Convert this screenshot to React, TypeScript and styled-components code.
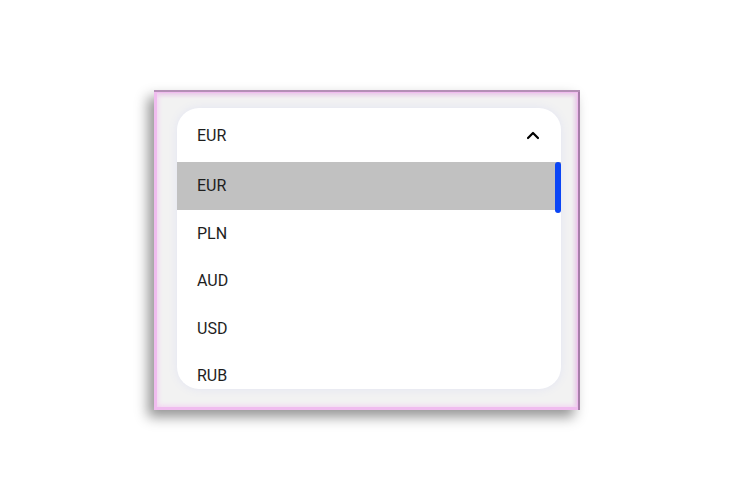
import * as React from 'react';
import styled, { createGlobalStyle } from 'styled-components';

const GlobalStyle = createGlobalStyle`
  html, body {
    margin: 0;
    padding: 0;
    background: #ffffff;
    font-family: Roboto, "Noto Sans", sans-serif;
  }
`;

const Page = styled.div`
  width: 734px;
  height: 500px;
  display: flex;
  align-items: center;
  justify-content: center;
`;

// the outer frame: soft pink bevel, darker violet along top and right
const Frame = styled.div`
  box-sizing: border-box;
  width: 426px;
  height: 320px;
  padding: 18px 19px 21px 23px;
  background: #f2f2f2;
  box-shadow:
    inset 0 2px 0 #b48fb6,
    inset -2px 0 0 #a77ea9,
    inset 0 0 0 3px #f0bcef,
    inset 0 0 5px 4px #f3cff2,
    inset -4px 4px 4px rgba(160, 110, 165, 0.4),
    -6px 7px 12px rgba(0, 0, 0, 0.42);
`;

const Select = styled.div`
  height: 281px;
  background: #ffffff;
  border-radius: 22px;
  overflow: hidden;
  display: flex;
  flex-direction: column;
  box-shadow: 0 0 10px rgba(120, 140, 255, 0.12);
`;

const Header = styled.div`
  flex: 0 0 54px;
  display: flex;
  align-items: center;
  justify-content: space-between;
  padding: 0 21px 0 20px;
  font-size: 16px;
  color: #1e1e1e;
`;

const List = styled.div`
  position: relative;
  flex: 1;
  overflow: hidden;
`;

const Option = styled.div<{ $active?: boolean }>`
  height: 47.5px;
  display: flex;
  align-items: center;
  padding-left: 20px;
  font-size: 16px;
  color: #1e1e1e;
  background: ${(p) => (p.$active ? '#c1c1c1' : 'transparent')};
`;

const Thumb = styled.div`
  position: absolute;
  top: 0;
  right: 0;
  width: 6px;
  height: 51px;
  border-radius: 3px;
  background: #0a45f5;
`;

const Chevron = () => (
  <svg width="14" height="10" viewBox="0 0 14 10" fill="none">
    <path d="M2 8 L7 3 L12 8" stroke="#000" strokeWidth="2.2" strokeLinecap="round" strokeLinejoin="round" />
  </svg>
);

const currencies = ['EUR', 'PLN', 'AUD', 'USD', 'RUB'];

export default function App() {
  const selected = 'EUR';
  return (
    <>
      <GlobalStyle />
      <Page>
        <Frame>
          <Select>
            <Header>
              <span>{selected}</span>
              <Chevron />
            </Header>
            <List>
              {currencies.map((c) => (
                <Option key={c} $active={c === selected}>
                  {c}
                </Option>
              ))}
              <Thumb />
            </List>
          </Select>
        </Frame>
      </Page>
    </>
  );
}
